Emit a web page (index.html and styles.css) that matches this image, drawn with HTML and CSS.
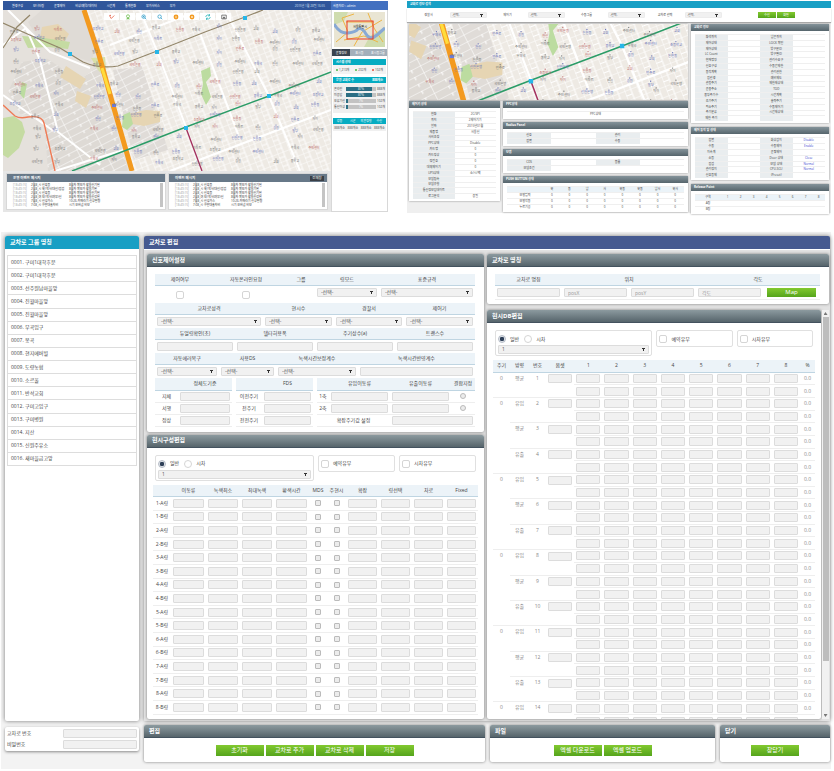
FILE: index.html
```
<!DOCTYPE html>
<html lang="ko">
<head>
    <meta charset="UTF-8">
    <meta name="viewport" content="width=device-width, initial-scale=1.0">
    <title>교차로 편집</title>
    <link rel="stylesheet" href="styles.css">
</head>
<body>
<div class="overview">
    <section class="monitor">
        <div class="monitor-main">
            <nav class="monitor-nav">
                <a href="#">환경구성</a><a href="#">모니터링</a><a href="#">운영제어</a><a href="#">비상/예약/데이터</a><a href="#">시간계</a><a href="#">통계현황</a><a href="#">부가서비스</a><a href="#">부가</a>
                <span class="clock">2015년 1월 28일 16:55</span>
            </nav>
            <div class="map">
                <svg class="map-svg" viewBox="3 10 328 161" preserveAspectRatio="none">
                    <defs>
                        <pattern id="streets" width="12" height="9" patternUnits="userSpaceOnUse" patternTransform="rotate(-21)">
                            <path d="M0 0H12M0 0V9M6 0V9M0 5H6" fill="none" stroke="#fff" stroke-width="0.9"/>
                        </pattern>
                        <pattern id="blocks" width="24" height="7" patternUnits="userSpaceOnUse" patternTransform="rotate(-27)">
                            <path d="M0 0H24M0 0V7M15 0V3" fill="none" stroke="#fff" stroke-width="1"/>
                        </pattern>
                    </defs>
                    <g id="city">
                        <rect x="0" y="0" width="340" height="180" fill="#eeeae4"/>
                        <rect x="0" y="0" width="340" height="180" fill="url(#streets)"/>
                        <path d="M0 10H84L97 48 132 171H0Z" fill="#e5e1dc"/>
                        <path d="M42 10H84L96 47 91 62 68 54 40 42 28 22Z" fill="#dfdbd6"/>
                        <path d="M22 62L46 58 80 80 98 66 128 171H48L44 118 20 114 8 92Z" fill="#dedad5"/>
                        <path d="M22 62L46 58 80 80 98 66 128 171H48L44 118 20 114 8 92Z" fill="url(#blocks)"/>
                        <path d="M113 70L142 66 168 150 134 160Z" fill="#e0dcd8"/>
                        <path d="M113 70L142 66 168 150 134 160Z" fill="url(#blocks)"/>
                        <path d="M3 118L14 116 22 122 25 132 19 148 8 158 3 155Z" fill="#c5dba2"/>
                        <path d="M42 27L58 24 69 34 65 41 48 42 40 38Z" fill="#e6d5b3"/>
                        <path d="M66 66L86 79 80 89 60 77ZM77 91L91 96 86 108 75 101Z" fill="#e6d5b3"/>
                        <path d="M128 114L146 110 160 111 160 122 144 126 132 124Z" fill="#e6d5b3"/>
                        <path d="M91 58L105 57 107 80 98 70Z" fill="#d9dfa7"/>
                        <path d="M22 36L38 37 70 42 68 49 48 47 28 48Z" fill="#c5dba2"/>
                        <path d="M123 115L130 112 133 124 127 130 122 127ZM201 71L210 67 211 76 206 82 211 97 206 105 201 94 203 84ZM22 82L27 84 24 99 20 94Z" fill="#bcdca0"/>
                        <g fill="none" stroke="#fff" stroke-width="2">
                            <path d="M3 45L26 28 40 60 58 132 100 165M8 10L50 52 90 68M3 95L55 132M55 171L140 145"/>
                            <path d="M140 10L157 51 186 127 202 171M225 10L269 96 300 171M200 33L238 134M170 171L331 110M110 45L200 10"/>
                        </g>
                        <path d="M3 23L32 36 60 48 83 62Q99 69 118 66L157 51 205 32 245 17 263 10M3 48L17 27 30 15" fill="none" stroke="#93866a" stroke-width="1.2"/>
                        <path d="M3 105L15 116Q20 119 28 117 42 115 44 123L55 171" fill="none" stroke="#ef7b56" stroke-width="1.4"/>
                        <path d="M84 10L99 55 113 105 132 171" fill="none" stroke="#f39a1f" stroke-width="5"/>
                        <path d="M102 68L110 94" fill="none" stroke="#ffdc3c" stroke-width="3"/>
                        <path d="M72 171L132 148 186 127 269 96 331 72" fill="none" stroke="#2b9c67" stroke-width="1.4"/>
                        <path d="M186 128L202 171" fill="none" stroke="#a3325e" stroke-width="1.4"/>
                        <g fill="#27b6e8"><path d="M184 126h4v4h-4zM267 94h4v4h-4zM155 50h4v4h-4zM68 52h4v4h-4zM243 16h4v4h-4z"/></g>
                        <rect x="112" y="104" width="4" height="3" fill="#6c7be0"/>
                        <g id="places"></g>
                    </g>
                </svg>
                <div class="map-tools">
                    <button aria-label="경로"><svg viewBox="0 0 8 8"><path d="M1 3l2 3 4-4" fill="none" stroke="#e5563a"/><circle cx="1.5" cy="2" r="1" fill="#e5563a"/></svg></button>
                    <button aria-label="위치"><svg viewBox="0 0 8 8"><circle cx="4" cy="3" r="2" fill="none" stroke="#6bbb4b"/><path d="M1 7h6L4 5z" fill="#6bbb4b"/></svg></button>
                    <button aria-label="확대"><svg viewBox="0 0 8 8"><circle cx="3.5" cy="3.5" r="2.3" fill="none" stroke="#2d9bc8"/><path d="M5 5l2 2M2.5 3.5h2M3.5 2.5v2" stroke="#2d9bc8"/></svg></button>
                    <button aria-label="축소"><svg viewBox="0 0 8 8"><circle cx="3.5" cy="3.5" r="2.3" fill="none" stroke="#2d9bc8"/><path d="M5 5l2 2" stroke="#2d9bc8"/></svg></button>
                    <button aria-label="이전"><svg viewBox="0 0 8 8"><circle cx="4" cy="4" r="3.2" fill="#f39a1f"/><path d="M4 2.5v3" stroke="#fff"/></svg></button>
                    <button aria-label="다음"><svg viewBox="0 0 8 8"><circle cx="4" cy="4" r="3.2" fill="#f39a1f"/><path d="M3 3l2 2M5 3l-2 2" stroke="#fff"/></svg></button>
                    <button aria-label="새로고침"><svg viewBox="0 0 8 8"><path d="M1 4a3 3 0 0 1 5-2M7 4a3 3 0 0 1-5 2M6 0v2.5H4M2 8V5.500H4" fill="none" stroke="#25b3b8"/></svg></button>
                    <button aria-label="화면"><svg viewBox="0 0 8 8"><path d="M1 1.500h6v5H1z" fill="none" stroke="#555"/><path d="M2 6l2-3 2 3z" fill="#555"/></svg></button>
                </div>
            </div>
            <div class="event-row">
                <div class="event">
                    <h3>운영 이벤트 메시지</h3>
                    <ul class="event-list"></ul>
                </div>
                <div class="event">
                    <h3>이벤트 메시지 <button>전체창</button></h3>
                    <ul class="event-list"></ul>
                </div>
            </div>
        </div>
        <aside class="monitor-side">
            <div class="login">사용자ID : admin</div>
            <svg class="minimap" viewBox="0 0 51 35" preserveAspectRatio="none">
                <rect width="51" height="35" fill="#e9e5d3"/>
                <path d="M0 0h14l-4 9-10 4zM36 24l15-9v20H30z" fill="#cfdcae"/>
                <path d="M2 30L14 20 8 6 20 2M20 34L28 20 48 8M34 1l6 15 9 14M12 10h28M10 28l20-4 14 6" fill="none" stroke="#eeb544"/>
                <path d="M0 12Q6 22 14 21T24 17Q28 15 32 22T43 23L51 16" fill="none" stroke="#88a9d4" stroke-width="3"/>
                <rect x="13" y="9" width="26" height="18" fill="none" stroke="#e93a26"/>
                <text x="26" y="16" text-anchor="middle">서울특별시</text>
            </svg>
            <div class="tabs"><button class="active">운영정보</button><button>표시등</button><button>표시등그룹</button></div>
            <h4>시스템 상태</h4>
            <div class="status"><span>1,213개</span><span>232개</span><span class="off">102개</span></div>
            <h4>운영 교차로 수 <span>888개소</span></h4>
            <div class="gauges" id="gauges"></div>
            <table class="side-table">
                <thead><tr><th>강동</th><th>시군</th><th>의견정형</th><th>수신</th></tr></thead>
                <tbody><tr><td>888개소</td><td>888개소</td><td>888개소</td><td>888개소</td></tr></tbody>
            </table>
        </aside>
    </section>

    <section class="search">
        <h2>교차로 정보 검색</h2>
        <div class="filters">
            <label for="f1">경찰서</label><select id="f1"><option>-선택-</option></select>
            <label for="f2">제어기</label><select id="f2"><option>-선택-</option></select>
            <label for="f3">수동그룹</label><select id="f3"><option>-선택-</option></select>
            <label for="f4">교차로 선택</label><select id="f4"><option>-선택-</option></select>
            <div class="filter-buttons"><button class="green">수신</button><button class="green">화면</button></div>
        </div>
        <div class="search-body">
            <div class="search-left">
                <svg class="map-small" viewBox="75 76 254 69" preserveAspectRatio="none"><use href="#city"/></svg>
                <div class="search-cols">
                    <div class="mini"><h3>제어기 상태</h3><table class="facts facts-ctrl" data-facts="controller"></table></div>
                    <div class="mini-stack">
                        <div class="mini"><h3>PPC상태</h3><table class="facts facts-one"><tbody><tr><td>PPC상태</td></tr></tbody></table></div>
                        <div class="mini"><h3>Radius Panel</h3><table class="facts facts-two" data-facts="radius"></table></div>
                        <div class="mini"><h3>모뎀</h3><table class="facts facts-two" data-facts="modem"></table></div>
                        <div class="mini"><h3>PUSH BUTTON 상태</h3>
                            <table class="facts facts-push">
                                <thead><tr><th></th><th>북</th><th>동</th><th>남</th><th>서</th><th>북동</th><th>북동</th><th>남서</th><th>북서</th></tr></thead>
                                <tbody>
                                    <tr><td>보행입력</td><td>0</td><td>0</td><td>0</td><td>0</td><td>0</td><td>0</td><td>0</td><td>0</td></tr>
                                    <tr><td>보행작동</td><td>0</td><td>0</td><td>0</td><td>0</td><td>0</td><td>0</td><td>0</td><td>0</td></tr>
                                    <tr><td>누르기공</td><td>0</td><td>0</td><td>0</td><td>0</td><td>0</td><td>0</td><td>0</td><td>0</td></tr>
                                </tbody>
                            </table>
                        </div>
                    </div>
                </div>
            </div>
            <div class="search-right">
                <div class="mini"><h3>교차로 정보</h3><table class="facts facts-cross" data-facts="cross"></table></div>
                <div class="mini"><h3>제어 동작 및 상태</h3><table class="facts facts-act" data-facts="action"></table></div>
                <div class="mini"><h3>Release Point</h3>
                    <table class="facts facts-release">
                        <thead><tr><th>구역</th><th>1</th><th>2</th><th>3</th><th>4</th><th>5</th><th>6</th><th>7</th><th>8</th></tr></thead>
                        <tbody><tr><td>A링</td><td colspan="8"></td></tr><tr><td>B링</td><td colspan="8"></td></tr></tbody>
                    </table>
                </div>
            </div>
        </div>
    </section>
</div>

<main class="editor">
    <aside class="editor-side">
        <div class="group-panel">
            <h2>교차로 그룹 명칭</h2>
            <ul class="group-list">
                <li>0001. 구미1대학후문</li>
                <li>0002. 구미1대학후문</li>
                <li>0003. 선주원남마을앞</li>
                <li>0004. 진월마을앞</li>
                <li>0005. 진월마을앞</li>
                <li>0006. 부곡입구</li>
                <li>0007. 봉곡</li>
                <li>0008. 현지에버빌</li>
                <li>0009. 도량농협</li>
                <li>0010. 소르울</li>
                <li>0011. 반석교회</li>
                <li>0012. 구미고입구</li>
                <li>0013. 구미병원</li>
                <li>0014. 지산</li>
                <li>0015. 신원주유소</li>
                <li>0016. 새마을금고앞</li>
            </ul>
        </div>
        <div class="login-box">
            <label for="crossNo">교차로 번호</label><input type="text" id="crossNo">
            <label for="crossPw">비밀번호</label><input type="password" id="crossPw">
        </div>
    </aside>

    <div class="editor-main">
        <div class="edit-panel">
            <h2>교차로 편집</h2>
            <div class="edit-body">
                <div class="edit-left">
                    <section class="panel">
                        <h3>신호제어설정</h3>
                        <div class="signal-form">
                            <div class="fields fields-a">
                                <label for="useCtrl">제어여부</label><label for="autoOn">자동온라인요청</label><span class="th">그룹</span><label for="ringMode">링모드</label><label for="spec">표준규격</label>
                                <input type="checkbox" id="useCtrl"><input type="checkbox" id="autoOn"><span></span><select id="ringMode"><option>-선택-</option></select><select id="spec"><option>-선택-</option></select>
                            </div>
                            <div class="fields fields-b">
                                <label for="kind">교차로성격</label><label for="phases">현시수</label><label for="police">경찰서</label><label for="ctrl">제어기</label>
                                <select id="kind"><option>-선택-</option></select><select id="phases"><option>-선택-</option></select><select id="police"><option>-선택-</option></select><select id="ctrl"><option>-선택-</option></select>
                            </div>
                            <div class="fields fields-c">
                                <label for="dual">듀얼링확인(초)</label><label for="delta">델타허용폭</label><label for="cyc">주기상수(a)</label><label for="trans">트랜스수</label>
                                <input type="text" id="dual"><input type="text" id="delta"><input type="text" id="cyc"><input type="text" id="trans">
                            </div>
                            <div class="fields fields-d">
                                <label for="recover">자동에러복구</label><label for="ds">사용DS</label><label for="adj">녹색시간보정계수</label><label for="refl">녹색시간반영계수</label>
                                <select id="recover"><option>-선택-</option></select><select id="ds"><option>-선택-</option></select><select id="adj"><option>-선택-</option></select><input type="text" id="refl">
                            </div>
                            <div class="sub-tables">
                                <table class="sub sub-jam">
                                    <thead><tr><th></th><th>정체도기준</th></tr></thead>
                                    <tbody>
                                        <tr><td>지체</td><td><input type="text" aria-label="지체"></td></tr>
                                        <tr><td>서행</td><td><input type="text" aria-label="서행"></td></tr>
                                        <tr><td>정상</td><td><input type="text" aria-label="정상"></td></tr>
                                    </tbody>
                                </table>
                                <table class="sub sub-fds">
                                    <thead><tr><th></th><th>FDS</th></tr></thead>
                                    <tbody>
                                        <tr><td>이전주기</td><td><input type="text" aria-label="이전주기"></td></tr>
                                        <tr><td>전주기</td><td><input type="text" aria-label="전주기"></td></tr>
                                        <tr><td>전전주기</td><td><input type="text" aria-label="전전주기"></td></tr>
                                    </tbody>
                                </table>
                                <table class="sub sub-axis">
                                    <thead><tr><th class="col-axis"></th><th>유입이동류</th><th>유출이동류</th><th class="col-pick">결합지정</th></tr></thead>
                                    <tbody>
                                        <tr><td>1축</td><td><input type="text" aria-label="1축 유입"></td><td><input type="text" aria-label="1축 유출"></td><td><input type="radio" name="axis" aria-label="1축 결합"></td></tr>
                                        <tr><td>2축</td><td><input type="text" aria-label="2축 유입"></td><td><input type="text" aria-label="2축 유출"></td><td><input type="radio" name="axis" aria-label="2축 결합"></td></tr>
                                        <tr><td colspan="2">확장주기값 설정</td><td colspan="2"><input type="text" aria-label="확장주기값 설정"></td></tr>
                                    </tbody>
                                </table>
                            </div>
                        </div>
                    </section>
                    <section class="panel panel-grow">
                        <h3>현시구성편집</h3>
                        <div class="options">
                            <div class="option option-main">
                                <label><input type="radio" name="plan" checked>일반</label><label><input type="radio" name="plan">시차</label>
                                <select aria-label="계획"><option>1</option></select>
                            </div>
                            <div class="option"><label><input type="checkbox">예약유무</label></div>
                            <div class="option"><label><input type="checkbox">시차유무</label></div>
                        </div>
                        <table class="phase-table">
                            <colgroup><col class="w18"><col class="w35"><col class="w34"><col class="w34"><col class="w35"><col class="w18"><col class="w19"><col><col><col><col></colgroup>
                            <thead><tr><th></th><th>이동류</th><th>녹색최소</th><th>최대녹색</th><th>황색시간</th><th>MDS</th><th>주현시</th><th>확장</th><th>링선택</th><th>차로</th><th>Fixed</th></tr></thead>
                            <tbody id="phases-body"></tbody>
                        </table>
                    </section>
                </div>
                <div class="edit-right">
                    <section class="panel">
                        <h3>교차로 명칭</h3>
                        <div class="place-form">
                            <label class="th" for="crossName">교차로 명칭</label><label class="th span2" for="posX">위치</label><label class="th span2" for="angle">각도</label>
                            <input type="text" id="crossName"><input type="text" id="posX" placeholder="posX"><input type="text" aria-label="posY" placeholder="posY"><input type="text" id="angle" placeholder="각도"><button class="green">Map</button>
                        </div>
                    </section>
                    <div class="scroll-area">
                        <section class="panel">
                            <h3>현시DB편집</h3>
                            <div class="options">
                                <div class="option option-main">
                                    <label><input type="radio" name="db" checked>일반</label><label><input type="radio" name="db">시차</label>
                                    <select aria-label="DB 계획"><option>1</option></select>
                                </div>
                                <div class="option"><label><input type="checkbox">예약유무</label></div>
                                <div class="option"><label><input type="checkbox">시차유무</label></div>
                            </div>
                            <div class="db-wrap">
                                <table class="db-table">
                                    <colgroup><col class="w17"><col class="w19"><col class="w17"><col><col><col><col><col><col><col><col><col><col class="w15"></colgroup>
                                    <thead><tr><th>주기</th><th>방향</th><th>번호</th><th>옵셋</th><th>1</th><th>2</th><th>3</th><th>4</th><th>5</th><th>6</th><th>7</th><th>8</th><th>%</th></tr></thead>
                                    <tbody id="db-body"></tbody>
                                </table>
                            </div>
                        </section>
                        <div class="scrollbar"><span class="up"></span><span class="thumb"></span><span class="down"></span></div>
                    </div>
                </div>
            </div>
        </div>
        <div class="actions">
            <section class="panel"><h3>편집</h3><div class="buttons"><button class="green">초기화</button><button class="green">교차로 추가</button><button class="green">교차로 삭제</button><button class="green">저장</button></div></section>
            <section class="panel"><h3>파일</h3><div class="buttons"><button class="green">엑셀 다운로드</button><button class="green">엑셀 업로드</button></div></section>
            <section class="panel"><h3>닫기</h3><div class="buttons"><button class="green">창닫기</button></div></section>
        </div>
    </div>
</main>
<script src="script.js"></script>
</body>
</html>
```
FILE: styles.css
```
* {
    box-sizing: border-box;
}

body {
    margin: 0;
    background: #fff;
    color: #444;
    font-family: "Open Sans", "Noto Sans CJK KR", sans-serif;
    font-size: 5px;
    line-height: 7px;
}

h2, h3, h4, ul {
    margin: 0;
    padding: 0;
    list-style: none;
}

button, input, select {
    font-family: inherit;
    font-size: inherit;
    line-height: inherit;
    margin: 0;
    padding: 0;
    min-width: 0;
}

button {
    border: 0;
    color: #fff;
    white-space: nowrap;
}

table {
    width: 100%;
    border-collapse: collapse;
    table-layout: fixed;
}

th, td {
    padding: 0;
    font-weight: normal;
    text-align: center;
    white-space: nowrap;
}

input[type="text"], input[type="password"], select {
    height: 9px;
    border: 1px solid #dcdcdc;
    border-radius: 1px;
    background: #f1f1f1;
    color: #555;
    padding: 0 3px;
}

input::placeholder {
    color: #999;
}

select {
    appearance: none;
    background: conic-gradient(from -27deg at 50% 100%, #333 54deg, transparent 0) right 3px center / 3px 3px no-repeat #f1f1f1;
}

input[type="checkbox"], input[type="radio"] {
    appearance: none;
    width: 8px;
    height: 8px;
    border: 1px solid #d5d5d5;
    border-radius: 2px;
    background: #fff;
}

input[type="radio"] {
    border-radius: 50%;
}

input[type="radio"]:checked {
    border-color: #b5bcc6;
    background: radial-gradient(circle, #2f4058 45%, #dfe3e8 60%);
}

.green {
    background: linear-gradient(#82c92f, #55a41c);
}

/* two small overview screens */
.overview {
    display: grid;
    grid-template-columns: 385fr 424fr;
    gap: 19px;
    padding: 1px 3px 0;
    height: 213px;
    font-size: 3px;
    line-height: 4px;
}

.monitor {
    display: grid;
    grid-template-columns: 328fr 57fr;
    height: 211px;
    background: #e6e6e6;
}

.monitor-main {
    display: flex;
    flex-direction: column;
    min-width: 0;
}

.monitor-nav {
    display: flex;
    align-items: center;
    gap: 10px;
    height: 9px;
    padding: 0 6px 0 9px;
    background: #30569b;
}

.monitor-nav a {
    color: #fff;
    text-decoration: none;
}

.clock {
    margin-left: auto;
    color: #d5e0f3;
}

.map {
    position: relative;
    height: 161px;
}

.map-svg, .map-small {
    display: block;
    width: 100%;
    height: 100%;
}

.map-tools {
    position: absolute;
    top: 3px;
    left: 101px;
    display: flex;
    gap: 1px;
}

.map-tools button {
    display: flex;
    justify-content: center;
    align-items: center;
    width: 15px;
    height: 7px;
    background: #fff;
}

.map-tools svg {
    width: 6px;
    height: 6px;
}

.event-row {
    display: flex;
    gap: 2px;
    padding: 2px 3px;
    flex: 1;
}

.event {
    flex: 1;
    background: #fff;
    border: 1px solid #d8d8d8;
}

.event h3 {
    display: flex;
    align-items: center;
    justify-content: space-between;
    height: 8px;
    padding: 0 3px 0 6px;
    background: #677888;
    color: #fff;
}

.event h3 button {
    width: 14px;
    height: 5px;
    background: #3a3f46;
}

.event-list {
    margin: 1px 2px 0 6px;
    border-right: 3px solid #c4c4c4;
}

.event-list li {
    display: grid;
    grid-template-columns: 18px 38px 1fr;
    color: #333;
    white-space: nowrap;
}

.event-list time {
    color: #999;
}

.monitor-side {
    background: #fff;
    border: 1px solid #d8d8d8;
    border-top: 0;
    min-width: 0;
}

.login {
    height: 9px;
    margin: 0 -1px;
    padding: 3px 2px 0;
    background: #4270c0;
    color: #fff;
}

.minimap {
    display: block;
    width: calc(100% - 4px);
    height: 35px;
    margin: 2px;
    font-size: 3px;
}

.tabs {
    display: grid;
    grid-template-columns: repeat(3, 1fr);
    height: 7px;
    background: #a3afba;
}

.tabs button {
    background: none;
}

.tabs .active {
    background: #3b444f;
}

.monitor-side h4 {
    display: flex;
    align-items: center;
    justify-content: space-between;
    height: 6px;
    margin: 3px 1px 0;
    padding: 0 3px;
    background: #05acc2;
    color: #fff;
}

.status {
    display: flex;
    justify-content: space-around;
    height: 9px;
    margin: 0 1px;
    padding-top: 3px;
    background: #f3f3f3;
}

.status span::before {
    content: "";
    display: inline-block;
    width: 2px;
    height: 2px;
    margin-right: 1px;
    border-radius: 50%;
    background: #4cb944;
}

.status .off::before {
    background: #e34d3a;
}

.gauges {
    display: grid;
    grid-template-columns: 11px 1fr 8px;
    gap: 2px 1px;
    margin: 0 1px;
    padding: 4px 1px;
    background: #f0f0f0;
    white-space: nowrap;
}

.gauge {
    height: 4px;
    background: #c3c3c3;
    color: #fff;
    text-align: center;
}

.side-table {
    width: calc(100% - 2px);
    margin: 5px 1px;
}

.side-table th {
    height: 6px;
    background: #05acc2;
    color: #fff;
}

.side-table td {
    height: 7px;
    background: #f0f0f0;
}

/* search screen */
.search {
    height: 212px;
    background: #efefef;
}

.search h2 {
    height: 7px;
    padding: 1px 3px;
    background: #19a0c5;
    color: #fff;
    font-size: 3px;
}

.filters {
    display: grid;
    grid-template-columns: 43fr 37fr 41fr 37fr 43fr 37fr 40fr 37fr 109fr;
    align-items: center;
    height: 14px;
    background: #fff;
    box-shadow: 0 1px 1px #aaa;
    text-align: center;
}

.filters select {
    height: 6px;
    border-color: #ececec;
    padding: 0 1px;
}

.filter-buttons {
    display: flex;
    justify-content: center;
    gap: 1px;
}

.filter-buttons button {
    width: 18px;
    height: 6px;
}

.search-body {
    display: grid;
    grid-template-columns: 279fr 138fr;
    gap: 3px;
    padding: 2px;
    height: 190px;
}

.map-small {
    height: 76px;
    box-shadow: 0 0 2px #999;
}

.search-cols {
    display: grid;
    grid-template-columns: 91fr 185fr;
    gap: 3px;
    align-items: start;
    margin-top: 1px;
}

.mini-stack, .search-right {
    display: flex;
    flex-direction: column;
    gap: 3px;
}

.search-right {
    gap: 4px;
}

.mini {
    background: #fff;
    padding-bottom: 2px;
    box-shadow: 0 0 2px #888;
}

.mini h3 {
    height: 7px;
    padding: 1px 3px;
    background: linear-gradient(#84939a, #56656c);
    color: #fff;
    font-size: 3px;
    margin-bottom: 3px;
}

.facts {
    width: calc(100% - 8px);
    margin: 0 4px;
}

.facts td, .facts th {
    border-top: 1px solid #efefef;
    line-height: 3px;
}

.facts .key {
    background: #e9edef;
}

.facts .link {
    color: #3d3fd0;
}

.facts thead th {
    height: 6px;
    background: #ebf3f8;
}

.facts-ctrl {
    height: 88px;
}

.facts-cross {
    height: 87px;
}

.facts-act {
    height: 41px;
}

.facts-one {
    height: 6px;
}

.facts-two {
    height: 12px;
}

.facts-push {
    height: 24px;
}

.facts-push th:first-child {
    width: 36px;
}

.facts-release {
    height: 18px;
}

.facts-release th:first-child {
    width: 26px;
}

/* editor screen */
.editor {
    display: grid;
    grid-template-columns: 134fr 686fr;
    gap: 5px;
    margin: 19px 3px 0 1px;
    padding: 4px 1px 7px 4px;
    background: #f3f3f3;
}

.editor h2, .panel h3 {
    display: flex;
    align-items: center;
    height: 13px;
    padding: 0 5px;
    border-radius: 2px 2px 0 0;
    color: #fff;
    font-size: 6px;
}

.editor-side {
    display: flex;
    flex-direction: column;
    gap: 6px;
}

.group-panel {
    height: 485px;
    background: #fff;
    border-radius: 2px;
    box-shadow: 0 0 4px #777;
}

.group-panel h2 {
    background: #189fc4;
}

.group-list {
    display: grid;
    grid-auto-rows: 1fr;
    height: 211px;
    margin: 6px 2px 0;
    border: 1px solid #ddd;
    border-top: 0;
}

.group-list li {
    display: flex;
    align-items: center;
    border-top: 1px solid #ddd;
    padding-left: 3px;
}

.login-box {
    display: grid;
    grid-template-columns: 56fr 74fr;
    row-gap: 2px;
    align-items: center;
    padding: 2px;
    background: #fff;
    border-radius: 2px;
    box-shadow: 0 1px 3px #888;
}

.editor-main {
    min-width: 0;
}

.edit-panel {
    height: 485px;
    background: #d0d0d0;
    border-radius: 2px;
    box-shadow: 0 0 4px #777;
}

.edit-panel h2 {
    background: #465a90;
}

.edit-body {
    display: grid;
    grid-template-columns: 337fr 342fr;
    gap: 3px;
    height: 472px;
    padding: 4px 1px 2px 3px;
    border-top: 1px solid #fff;
    background: #e2e2e2;
}

.edit-left, .edit-right {
    display: flex;
    flex-direction: column;
    gap: 3px;
    min-width: 0;
    min-height: 0;
}

.edit-right {
    gap: 6px;
}

.panel {
    background: #fff;
    border-radius: 2px;
    box-shadow: 0 0 3px #777;
}

.panel h3 {
    background: linear-gradient(#8c9a9f, #56646b);
    border-bottom: 1px solid #43525e;
}

.panel-grow {
    flex: 1;
}

.signal-form {
    padding: 7px 9px 5px 8px;
}

.fields, .place-form {
    display: grid;
    grid-template-rows: 12px 13px;
    align-items: center;
}

.fields-a {
    grid-template-columns: 50fr 82fr 28fr 64fr 96fr;
    grid-template-rows: 12px 17px;
}

.fields-b {
    grid-template-columns: 108fr 71fr 70fr 71fr;
}

.fields-c {
    grid-template-columns: repeat(4, 1fr);
}

.fields-d {
    grid-template-columns: 64fr 57fr 82fr 117fr;
}

.fields label, .th {
    display: flex;
    align-items: center;
    justify-content: center;
    align-self: stretch;
    background: #ecf3f8;
    border-bottom: 1px solid #bfd5e2;
}

.fields select, .fields input[type="text"], .place-form input {
    margin: 0 2px;
}

.fields-a select {
    align-self: start;
    margin-top: 2px;
}

.fields input[type="checkbox"] {
    justify-self: center;
}

.sub-tables {
    display: grid;
    grid-template-columns: 77fr 77fr 158fr;
    gap: 4px;
}

.sub th, .phase-table th, .db-table th {
    height: 12px;
    background: #ecf3f8;
    border-bottom: 1px solid #bfd5e2;
}

.sub td {
    height: 12px;
    line-height: 9px;
    border-bottom: 1px solid #eee;
}

.sub input[type="text"], .phase-table input[type="text"], .db-table input {
    display: block;
    width: calc(100% - 4px);
    margin: 0 2px;
}

.sub input[type="radio"], .phase-table input[type="checkbox"] {
    display: block;
    width: 6px;
    height: 6px;
    margin: 0 auto;
    border-color: #bbb;
    background: #ececec;
}

.phase-table input[type="checkbox"] {
    border-radius: 1px;
}

.sub-jam th:first-child {
    width: 23px;
}

.sub-fds th:first-child {
    width: 26px;
}

.col-axis {
    width: 12px;
}

.col-pick {
    width: 24px;
}

.options {
    display: grid;
    grid-template-columns: 159fr 77fr 77fr;
    gap: 4px;
    align-items: start;
    padding: 7px 8px 4px;
}

.option {
    height: 17px;
    padding: 4px 2px;
    border: 1px solid #e0e0e0;
    border-radius: 2px;
}

.option label {
    display: inline-flex;
    align-items: center;
    gap: 4px;
    margin-right: 5px;
}

.option-main {
    height: 26px;
}

.option-main select {
    display: block;
    width: 100%;
}

.phase-table {
    width: calc(100% - 12px);
    height: 230px;
    margin: 0 6px;
}

.phase-table td {
    border-bottom: 1px solid #eee;
}

.w15 {
    width: 15px;
}

.w17 {
    width: 17px;
}

.w18 {
    width: 18px;
}

.w19 {
    width: 19px;
}

.w34 {
    width: 34px;
}

.w35 {
    width: 35px;
}

.place-form {
    grid-template-columns: 67fr 67fr 67fr 67fr 57fr;
    margin: 7px 9px 4px 8px;
    border-bottom: 1px solid #eee;
}

.span2 {
    grid-column: span 2;
}

.place-form button {
    height: 9px;
    margin: 0 4px;
    font-size: 6px;
}

.scroll-area {
    display: grid;
    grid-template-columns: 1fr 7px;
    gap: 1px;
    flex: 1;
    min-height: 0;
}

.scroll-area .panel {
    display: flex;
    flex-direction: column;
    min-width: 0;
    min-height: 0;
}

.db-wrap {
    flex: 1;
    overflow: hidden;
    padding: 0 6px;
}

.db-table {
    height: 368px;
}

.db-table td {
    border-bottom: 1px solid #eee;
    color: #888;
}

.db-table .open {
    border-bottom: 0;
}

.db-table .top {
    vertical-align: top;
    padding-top: 2px;
}

.scrollbar {
    display: flex;
    flex-direction: column;
    align-items: center;
    background: #f1f1f1;
}

.up, .down {
    width: 4px;
    height: 3px;
    margin: 2px 0;
    background: #777;
    clip-path: polygon(0 100%, 50% 0, 100% 100%);
}

.down {
    margin-top: auto;
    clip-path: polygon(0 0, 50% 100%, 100% 0);
}

.thumb {
    width: 6px;
    height: 84%;
    background: #bdbdbd;
}

.actions {
    display: grid;
    grid-template-columns: 341fr 225fr 110fr;
    gap: 5px;
    margin-top: 4px;
}

.buttons {
    display: flex;
    justify-content: center;
    gap: 2px;
    padding: 7px 0 6px;
}

.buttons button {
    width: 48px;
    height: 11px;
    font-size: 6px;
}
```
FILE: script.js
```
const field = (label) => `<td><input type="text" aria-label="${label}"></td>`;

// phase rows 1-A .. 8-B
let phaseRows = '';
for (let i = 1; i <= 8; i++) {
    for (const ring of ['A', 'B']) {
        const name = `${i}-${ring}링`;
        const check = `<td><input type="checkbox" aria-label="${name}"></td>`;
        phaseRows += `<tr><td>${name}</td>${field(name).repeat(4)}${check.repeat(2)}${field(name).repeat(4)}</tr>`;
    }
}
document.getElementById('phases-body').innerHTML = phaseRows;

// two rows per number, the cycle shows where a new group starts
const cycleStart = [1, 2, 5, 8, 11, 14];
let dbRows = '';
for (let n = 1; n <= 14; n++) {
    const dir = n === 1 ? '평균' : ['유입', '평균', '유출'][(n - 2) % 3];
    const groupEnd = cycleStart.includes(n + 1) ? '' : 'open';
    const cells = field(n).repeat(8) + '<td>0.0</td>';
    dbRows += `<tr><td rowspan="2" class="top ${groupEnd}">${cycleStart.includes(n) ? 0 : ''}</td>
        <td rowspan="2" class="top">${dir}</td><td rowspan="2" class="top">${n}</td>
        <td class="open"><input type="text" aria-label="옵셋 ${n}"></td>${cells}</tr>
        <tr><td></td>${cells}</tr>`;
}
document.getElementById('db-body').innerHTML = dbRows;

// key / value tables
const facts = {
    controller: [['현황', '2C/SPI'], ['위치', '2제어기기'], ['날짜', '2015년01월'], ['제품명', '서울신'], ['서비조정', ''], ['PPC상태', 'Disable'], ['카드명', '0'], ['카드정상', '0'], ['정전호', '0'], ['대체제어기', '0'], ['UPS상태', '소/시/백'], ['모뎀접속', ''], ['모뎀유형', ''], ['통신정보업데이트', ''], ['로그분석', '종일']],
    radius: [['신호', '', '관리', ''], ['점멸', '', '수동', '']],
    modem: [['CDS', '', '볼륨', ''], ['모뎀조건', '']],
    cross: [['황색위치', '', '남은위치'], ['제어상태', '', 'LOCK 확인'], ['제어상태', '', '방구분ID'], ['LC Count', '', '방구별ID'], ['현재명칭', '', '관리수요구'], ['신호구성', '', '수동간제한'], ['동작계획', '', '관리권한'], ['점선경', '', '예비제도'], ['관할주기', '', '제한제상태'], ['운용주소', '', 'TOD'], ['중앙주기수', '', '시간계획'], ['초기주기', '', '출력주기'], ['최소주기', '', '수동제어기'], ['주기분류', '', '시간제상태'], ['제한 주기', '', '']],
    action: [['점멸', '', '화상감지', 'Disable'], ['수동', '', '수동제어', 'Enable'], ['지속계', '', '운영제어'], ['소등', '', 'Door 상태', 'Close'], ['점검', '', '모뎀 상태', 'Normal'], ['관리정지', '', 'CPU-SCU', 'Normal'], ['신호등제', '', '(Preset)']]
};
document.querySelectorAll('[data-facts]').forEach((table) => {
    const rows = facts[table.dataset.facts];
    const cols = rows[0].length > 2 ? 4 : 2;
    let html = '<tbody>';
    rows.forEach((row) => {
        html += '<tr>';
        for (let c = 0; c < cols; c++) {
            const cls = c % 2 === 0 && row[c] !== undefined ? 'key' : c === 3 ? 'link' : '';
            html += `<td class="${cls}">${row[c] || ''}</td>`;
        }
        html += '</tr>';
    });
    table.innerHTML = html + '</tbody>';
});

// event log
const events = [['2월8_시 신호등', '8월차 확보가 활율신기된'], ['2월8_시 북/역서(대신)점검', '8월차 확보가 활율기된'], ['2월8_시 신호등', '8월차 확보가 활율신기된'], ['2월8_여 보/역서(여부)신', '8월차 확보가 활율신강된'], ['7월8_시 신성가스', '10:26 카메라기 신상발령'], ['7:08_시 구현대출차비', '시기 오버럽 비보']];
document.querySelectorAll('.event-list').forEach((list) => {
    list.innerHTML = events.map(([a, b]) => `<li><time>[18:49:15]</time><span>${a}</span><span>${b}</span></li>`).join('');
});

// gauges
document.getElementById('gauges').innerHTML = [['온라인', 87, 888], ['미응답', 87, 888], ['오류기신', 7, 102], ['통신이상', 7, 102]].map(([name, pct, n]) =>
    `<span>${name}</span><div class="gauge" style="background:linear-gradient(90deg,#2c6e84 ${pct}%,#c3c3c3 ${pct}%)">${pct}%</div><span>${n}개</span>`).join('');

// place names on the map
const names = ['논현동', '초등학교', '우체국', '신한은행', '중학교', '아파트', '국민은행', '빌딩', '교회', '자이', '언주로', '한신', '주민센터', '공원'];
const colors = ['#777', '#777', '#6a74b8', '#777', '#bd6a6a', '#6a74b8'];
let seed = 7;
const rand = () => (seed = (seed * 16807) % 2147483647) / 2147483647;
let places = '';
for (let y = 28; y < 168; y += 11) {
    for (let x = 14; x < 320; x += 20) {
        const px = Math.round(x + rand() * 6);
        const py = Math.round(y + rand() * 5);
        const color = colors[Math.floor(rand() * colors.length)];
        // keep names clear of the edges of the small map
        const onEdge = Math.abs(px - 75) < 8 || Math.abs(py - 77) < 4 || Math.abs(py - 146) < 3;
        if (onEdge || (px < 28 && py > 112) || rand() < 0.1) continue;
        places += `<circle cx="${px}" cy="${py - 4}" r="0.6" fill="${color}"/><text x="${px}" y="${py}" font-size="3" text-anchor="middle" fill="${color}">${names[Math.floor(rand() * names.length)]}</text>`;
    }
}
document.getElementById('places').innerHTML = places;
```
